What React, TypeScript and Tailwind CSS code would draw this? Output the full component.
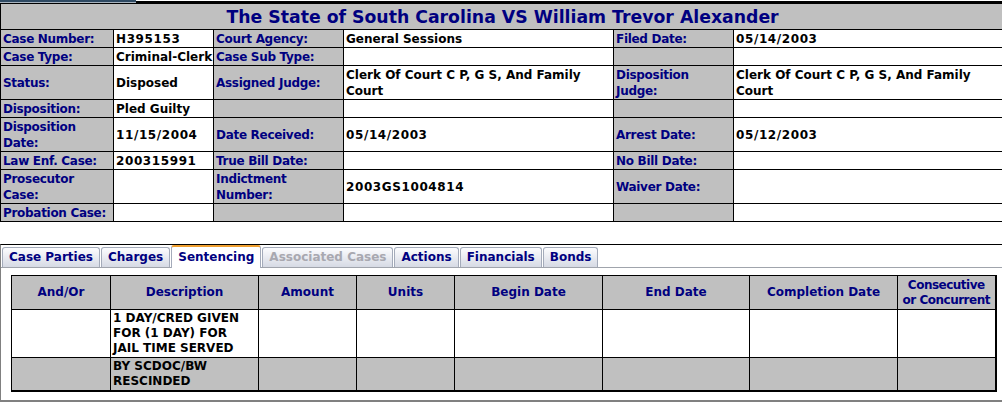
import React from "react";

const L = "bg-[#c0c0c0] text-[#000080] border border-black pl-[2px] pr-[1px] pt-px pb-0 leading-[16px] align-middle tracking-[-0.3px]";
const V = "bg-white text-black border border-black pl-[2px] pr-[1px] pt-px pb-0 leading-[16px] align-middle";

function Lbl({ children }: { children?: React.ReactNode }) {
  return <td className={L}>{children}</td>;
}
function Val({ children, num, wrap }: { children?: React.ReactNode; num?: boolean; wrap?: boolean }) {
  return (
    <td className={V + (num ? " tracking-[0.6px]" : "") + (wrap ? "" : " whitespace-nowrap")}>{children}</td>
  );
}

const tabs = [
  { t: "Case Parties", s: "n" },
  { t: "Charges", s: "n" },
  { t: "Sentencing", s: "a" },
  { t: "Associated Cases", s: "d" },
  { t: "Actions", s: "n" },
  { t: "Financials", s: "n" },
  { t: "Bonds", s: "n" },
];

export default function App() {
  return (
    <div className="w-[1002px] h-[404px] overflow-hidden bg-white font-['DejaVu_Sans',Verdana,sans-serif] font-bold text-[12px] leading-[15px]">
      <div className="flex h-[3px]">
        <div className="w-[136px] h-[3px] bg-[#2f4a63] border-b border-[#a8b4c0]" />
        <div className="flex-1 h-[3px] border-t border-white bg-black" />
      </div>
      <table className="table-fixed w-[1004px] border-collapse">
        <colgroup>
          <col className="w-[113px]" />
          <col className="w-[100px]" />
          <col className="w-[130px]" />
          <col className="w-[270px]" />
          <col className="w-[120px]" />
          <col className="w-[271px]" />
        </colgroup>
        <tbody>
          <tr>
            <td colSpan={6} className="bg-[#c0c0c0] border border-black h-[26px] text-center text-[17.3px] leading-[24px] text-[#000080]">
              The State of South Carolina VS William Trevor Alexander
            </td>
          </tr>
          <tr>
            <Lbl>Case Number:</Lbl>
            <Val num>H395153</Val>
            <Lbl>Court Agency:</Lbl>
            <Val>General Sessions</Val>
            <Lbl>Filed Date:</Lbl>
            <Val num>05/14/2003</Val>
          </tr>
          <tr>
            <Lbl>Case Type:</Lbl>
            <Val>Criminal-Clerk</Val>
            <Lbl>Case Sub Type:</Lbl>
            <Val />
            <Lbl />
            <Val />
          </tr>
          <tr>
            <Lbl>Status:</Lbl>
            <Val>Disposed</Val>
            <Lbl>Assigned Judge:</Lbl>
            <Val wrap>Clerk Of Court C P, G S, And Family Court</Val>
            <Lbl>Disposition Judge:</Lbl>
            <Val wrap>Clerk Of Court C P, G S, And Family Court</Val>
          </tr>
          <tr>
            <Lbl>Disposition:</Lbl>
            <Val>Pled Guilty</Val>
            <Lbl />
            <Val />
            <Lbl />
            <Val />
          </tr>
          <tr>
            <Lbl>Disposition Date:</Lbl>
            <Val num>11/15/2004</Val>
            <Lbl>Date Received:</Lbl>
            <Val num>05/14/2003</Val>
            <Lbl>Arrest Date:</Lbl>
            <Val num>05/12/2003</Val>
          </tr>
          <tr>
            <Lbl>Law Enf. Case:</Lbl>
            <Val num>200315991</Val>
            <Lbl>True Bill Date:</Lbl>
            <Val />
            <Lbl>No Bill Date:</Lbl>
            <Val />
          </tr>
          <tr>
            <Lbl>Prosecutor Case:</Lbl>
            <Val />
            <Lbl>Indictment Number:</Lbl>
            <Val num>2003GS1004814</Val>
            <Lbl>Waiver Date:</Lbl>
            <Val />
          </tr>
          <tr>
            <Lbl>Probation Case:</Lbl>
            <Val />
            <Lbl />
            <Val />
            <Lbl />
            <Val />
          </tr>
        </tbody>
      </table>

      <div className="mt-[22px] w-[1006px] border-t border-t-black border-l border-l-[#808080] border-b-2 border-b-[#808080] pb-[8px]">
        <div className="flex items-end h-[23px] pl-[1px] gap-[1px] border-b border-[#a0a4ac]">
          {tabs.map((tb) =>
            tb.s === "a" ? (
              <div
                key={tb.t}
                className="h-[23px] -mb-px px-[6px] bg-white border-x border-[#a4abba] border-t-2 border-t-[#f0a030] rounded-t-[3px] leading-[20px] text-[#000080]"
              >
                {tb.t}
              </div>
            ) : (
              <div
                key={tb.t}
                className={
                  "h-[20px] px-[6px] bg-gradient-to-b from-[#fcfcfe] to-[#d6dae4] border border-b-0 border-[#a4abba] rounded-t-[3px] leading-[19px] " +
                  (tb.s === "d" ? "text-[#a8a8b0]" : "text-[#000080]")
                }
              >
                {tb.t}
              </div>
            )
          )}
        </div>
        <div className="pl-[10px] pt-[7px]">
          <table className="table-fixed w-[984px] border-collapse border-r-2 border-b-2 border-black">
            <colgroup>
              <col className="w-[99px]" />
              <col className="w-[148px]" />
              <col className="w-[98px]" />
              <col className="w-[98px]" />
              <col className="w-[148px]" />
              <col className="w-[147px]" />
              <col className="w-[148px]" />
              <col className="w-[98px]" />
            </colgroup>
            <tbody>
              <tr className="bg-[#c0c0c0] text-[#000080] text-center">
                {["And/Or", "Description", "Amount", "Units", "Begin Date", "End Date", "Completion Date"].map((h) => (
                  <td key={h} className="border border-black h-[34px] py-px align-middle">
                    {h}
                  </td>
                ))}
                <td className="border border-black py-px align-middle tracking-[-0.5px]">
                  Consecutive
                  <br />
                  or Concurrent
                </td>
              </tr>
              <tr className="bg-white text-black">
                <td className="border border-black py-px" />
                <td className="border border-black py-px pl-[2px] align-middle">
                  1 DAY/CRED GIVEN
                  <br />
                  FOR (1 DAY) FOR
                  <br />
                  JAIL TIME SERVED
                </td>
                <td className="border border-black" />
                <td className="border border-black" />
                <td className="border border-black" />
                <td className="border border-black" />
                <td className="border border-black" />
                <td className="border border-black" />
              </tr>
              <tr className="bg-[#c0c0c0] text-black">
                <td className="border border-black py-px" />
                <td className="border border-black py-px pl-[2px] align-middle">
                  BY SCDOC/BW
                  <br />
                  RESCINDED
                </td>
                <td className="border border-black" />
                <td className="border border-black" />
                <td className="border border-black" />
                <td className="border border-black" />
                <td className="border border-black" />
                <td className="border border-black" />
              </tr>
            </tbody>
          </table>
        </div>
      </div>
    </div>
  );
}
